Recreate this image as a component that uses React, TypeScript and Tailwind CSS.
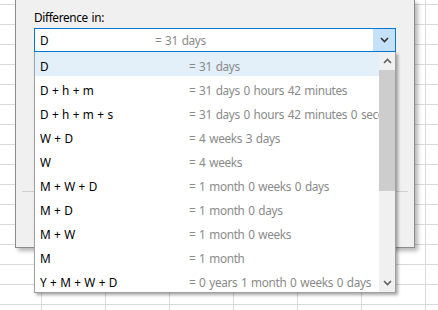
import React from "react";

const rows: [string, string][] = [
  ["D", "= 31 days"],
  ["D + h + m", "= 31 days 0 hours 42 minutes"],
  ["D + h + m + s", "= 31 days 0 hours 42 minutes 0 seconds"],
  ["W + D", "= 4 weeks 3 days"],
  ["W", "= 4 weeks"],
  ["M + W + D", "= 1 month 0 weeks 0 days"],
  ["M + D", "= 1 month 0 days"],
  ["M + W", "= 1 month 0 weeks"],
  ["M", "= 1 month"],
  ["Y + M + W + D", "= 0 years 1 month 0 weeks 0 days"],
];

function Chevron({ up = false, className = "" }: { up?: boolean; className?: string }) {
  return (
    <svg width="9" height="6" viewBox="0 0 9 6" className={className}>
      <polyline
        points={up ? "1,5 4.5,1.5 8,5" : "1,1 4.5,4.5 8,1"}
        fill="none"
        stroke="currentColor"
        strokeWidth="1.6"
      />
    </svg>
  );
}

export default function App() {
  return (
    <div className="relative w-[438px] h-[310px] overflow-hidden bg-white bg-[image:linear-gradient(to_bottom,#d9d9d9_1px,transparent_1px),linear-gradient(to_right,#d9d9d9_1px,transparent_1px)] bg-[size:64px_20px] bg-[position:41px_4px] font-['Noto_Sans',sans-serif] text-[11.8px] tracking-[-0.35px] [word-spacing:1px] text-black">
      <div className="absolute left-[15px] top-0 w-[400px] h-[248px] bg-[#f0f0f0] border-l border-r border-b border-[#8c8c8c] shadow-[3px_3px_4px_rgba(0,0,0,0.28)]">
        <div className="pl-[18px] pt-[9px]">
          <div className="leading-[16px]">Difference in:</div>
          <div className="mt-[3px] w-[362px] h-[24px] border border-[#0078d7] bg-white flex items-center">
            <span className="pl-[5px] w-[120px] leading-[16px]">D</span>
            <span className="flex-1 text-[#8a8a8a] leading-[16px]">= 31 days</span>
            <span className="w-[22px] h-full bg-[#c5e1f8] flex items-center justify-center text-[#333]">
              <Chevron />
            </span>
          </div>
        </div>
        <div className="mt-[139px] mx-[6px] h-px bg-[#d0d0d0]" />
      </div>

      <div className="absolute left-[34px] top-[52px] w-[362px] h-[241px] bg-white border-l border-r border-b border-[#a0a0a0] shadow-[2px_2px_3px_rgba(0,0,0,0.35)] flex">
        <div className="flex-1 min-w-0 overflow-hidden">
          {rows.map(([a, b], i) => (
            <div
              key={i}
              className={`h-[24px] pt-[3px] flex items-center whitespace-nowrap ${i === 0 ? "bg-[#e3eff9]" : ""}`}
            >
              <span className="pl-[5px] w-[154px] shrink-0 leading-[16px]">{a}</span>
              <span className="text-[#8a8a8a] leading-[16px]">{b}</span>
            </div>
          ))}
        </div>
        <div className="w-[16px] bg-[#f0f0f0] flex flex-col">
          <div className="h-[18px] flex items-center justify-center text-[#606060]">
            <Chevron up />
          </div>
          <div className="h-[121px] bg-[#cdcdcd]" />
          <div className="flex-1" />
          <div className="h-[18px] flex items-center justify-center text-[#606060]">
            <Chevron />
          </div>
        </div>
      </div>
    </div>
  );
}
